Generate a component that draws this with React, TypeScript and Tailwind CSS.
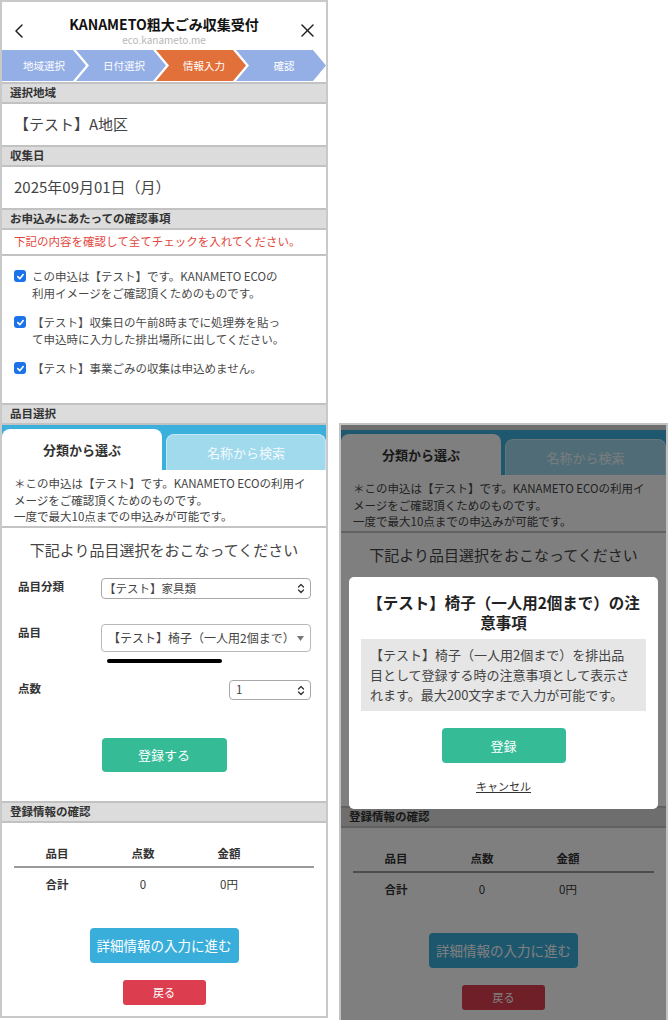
import React from 'react';

const steps = [
  { label: '地域選択', active: false },
  { label: '日付選択', active: false },
  { label: '情報入力', active: true },
  { label: '確認', active: false },
];

const SectionHeader: React.FC<{ children: React.ReactNode }> = ({ children }) => (
  <div className="flex h-[22px] items-center border-y-2 border-[#c2c2c2] bg-[#dcdcdc] px-[8px] text-[11.5px] font-bold leading-none text-[#333]">
    {children}
  </div>
);

const UpDownIcon: React.FC = () => (
  <svg width="8" height="11" viewBox="0 0 8 11" fill="none" stroke="#333" strokeWidth="1.3" strokeLinecap="round" strokeLinejoin="round">
    <path d="M1.5 4 L4 1.5 L6.5 4" />
    <path d="M1.5 7 L4 9.5 L6.5 7" />
  </svg>
);

const CheckMark: React.FC = () => (
  <span className="mt-[2px] flex h-[12px] w-[12px] shrink-0 items-center justify-center rounded-[3px] bg-[#1a73e8]">
    <svg width="9" height="9" viewBox="0 0 10 10" fill="none" stroke="white" strokeWidth="1.8" strokeLinecap="round" strokeLinejoin="round">
      <path d="M2 5.2 L4.2 7.4 L8 2.8" />
    </svg>
  </span>
);

const TopPart: React.FC = () => (
  <>
    {/* title bar */}
    <div className="grid h-[48px] grid-cols-[40px_1fr_40px] items-center pt-[9px]">
      <div className="pl-[12px]">
        <svg width="10" height="14" viewBox="0 0 10 14" fill="none" stroke="#222" strokeWidth="1.5" strokeLinecap="round" strokeLinejoin="round">
          <path d="M8 1 L2 7 L8 13" />
        </svg>
      </div>
      <div className="flex flex-col items-center">
        <div className="text-[14px] font-bold leading-[18px] text-[#111]">KANAMETO粗大ごみ収集受付</div>
        <div className="mt-px text-[10px] leading-[12px] text-[#b8b8b8]">eco.kanameto.me</div>
      </div>
      <div className="flex justify-end pr-[12px]">
        <svg width="13" height="13" viewBox="0 0 13 13" fill="none" stroke="#222" strokeWidth="1.5" strokeLinecap="round">
          <path d="M1 1 L12 12" />
          <path d="M12 1 L1 12" />
        </svg>
      </div>
    </div>

    {/* steps */}
    <div className="mb-px flex h-[31px] bg-white">
      {steps.map((s, i) => (
        <div
          key={s.label}
          className={`flex flex-1 items-center justify-center text-[10.5px] text-white ${
            i === 0
              ? '[clip-path:polygon(0_0,calc(100%-13px)_0,100%_50%,calc(100%-13px)_100%,0_100%)]'
              : '-ml-[10px] pl-[6px] [clip-path:polygon(0_0,calc(100%-13px)_0,100%_50%,calc(100%-13px)_100%,0_100%,13px_50%)]'
          } ${s.active ? 'bg-[#e2703a]' : 'bg-[#94aee6]'}`}
        >
          {s.label}
        </div>
      ))}
    </div>

    <SectionHeader>選択地域</SectionHeader>
    <div className="flex h-[41px] items-center pl-3 text-[15px] text-[#444]">【テスト】A地区</div>
    <SectionHeader>収集日</SectionHeader>
    <div className="flex h-[41px] items-center pl-3 text-[15px] text-[#444]">2025年09月01日（月）</div>
    <SectionHeader>お申込みにあたっての確認事項</SectionHeader>
    <div className="flex h-[26px] items-center border-b-2 border-[#c2c2c2] pl-3 text-[11.5px] text-[#e2483d]">
      下記の内容を確認して全てチェックを入れてください。
    </div>

    {/* confirmations */}
    <div className="h-[147px] space-y-[12px] pl-3 pt-[12px]">
      <div className="flex gap-[6px]">
        <CheckMark />
        <p className="text-[11.5px] leading-[17px] text-[#4a4a4a]">
          この申込は【テスト】です。KANAMETO ECOの<br />利用イメージをご確認頂くためのものです。
        </p>
      </div>
      <div className="flex gap-[6px]">
        <CheckMark />
        <p className="text-[11.5px] leading-[17px] text-[#4a4a4a]">
          【テスト】収集日の午前8時までに処理券を貼っ<br />て申込時に入力した排出場所に出してください。
        </p>
      </div>
      <div className="flex gap-[6px]">
        <CheckMark />
        <p className="text-[11.5px] leading-[17px] text-[#4a4a4a]">【テスト】事業ごみの収集は申込めません。</p>
      </div>
    </div>

    <SectionHeader>品目選択</SectionHeader>
  </>
);

// covered: the part lying under the modal is not shown
const ItemPart: React.FC<{ covered?: boolean }> = ({ covered }) => (
  <>
    {/* tabs */}
    <div className="flex h-[45px] items-end gap-[4px] bg-[#3cb0dc]">
      <div className="flex h-[41px] w-[160px] items-center justify-center rounded-t-[8px] bg-white text-[13px] font-bold text-[#333]">
        分類から選ぶ
      </div>
      <div className="flex h-[36px] flex-1 items-center justify-center rounded-t-[8px] border border-b-0 border-[#c6e8f4] bg-[#a1d9ed] text-[13px] text-[#f2fafd]">
        名称から検索
      </div>
    </div>
    <div className="h-[58px] border-b-2 border-[#c4c4c4] pl-3 pt-[5px] text-[11.5px] leading-[16.5px] text-[#444]">
      ＊この申込は【テスト】です。KANAMETO ECOの利用イ<br />メージをご確認頂くためのものです。<br />一度で最大10点までの申込みが可能です。
    </div>

    {/* item form */}
    <div className="h-[273px] pt-[11px]">
      <div className="text-center text-[15px] leading-[22px] text-[#444]">下記より品目選択をおこなってください</div>
      <div className={`${covered ? 'invisible' : ''}`}>
        <div className="mt-[17px] grid grid-cols-[83px_1fr] pl-[16px] pr-[15px] text-[11.5px] text-[#333]">
          <div className="font-bold leading-[17px]">品目分類</div>
          <div className="flex h-[21px] items-center justify-between rounded-[4px] border border-[#a8a8a8] pl-[2px] pr-[5px] text-[#444]">
            <span>【テスト】家具類</span>
            <UpDownIcon />
          </div>

          <div className="mt-[25px] font-bold leading-[17px]">品目</div>
          <div className="mt-[25px]">
            <div className="flex h-[28px] items-center justify-between rounded-[4px] border border-[#b8b8b8] pl-[6px] pr-[6px] text-[12px] text-[#444]">
              <span>【テスト】椅子（一人用2個まで）</span>
              <svg width="7" height="5" viewBox="0 0 7 5"><path d="M0 0 H7 L3.5 5 Z" fill="#777" /></svg>
            </div>
            <div className="ml-[6px] mt-[7px] h-[4px] w-[115px] rounded-full bg-black" />
          </div>

          <div className="mt-[17px] font-bold leading-[17px]">点数</div>
          <div className="mt-[17px] flex justify-end">
            <div className="flex h-[20px] w-[82px] items-center justify-between rounded-[4px] border border-[#a8a8a8] pl-[6px] pr-[5px] text-[#444]">
              <span>1</span>
              <UpDownIcon />
            </div>
          </div>
        </div>
        <button className="mx-auto mt-[38px] flex h-[34px] w-[125px] items-center justify-center rounded-[4px] bg-[#35bc97] text-[13px] text-white">
          登録する
        </button>
      </div>
    </div>

    <SectionHeader>登録情報の確認</SectionHeader>

    {/* summary */}
    <div className="h-[193px] pt-[19px]">
      <div className="mx-3">
        <div className="grid h-[26px] grid-cols-[86px_86px_86px_1fr] items-center border-b-2 border-[#9a9a9a] text-center text-[11.5px] font-bold text-[#333]">
          <div>品目</div>
          <div>点数</div>
          <div>金額</div>
          <div />
        </div>
        <div className="grid h-[34px] grid-cols-[86px_86px_86px_1fr] items-center text-center text-[11.5px] text-[#333]">
          <div className="font-bold">合計</div>
          <div>0</div>
          <div>0円</div>
          <div />
        </div>
      </div>
      <button className="mx-auto mt-[26px] flex h-[35px] w-[149px] items-center justify-center rounded-[4px] bg-[#3aaedb] text-[13.5px] text-white">
        詳細情報の入力に進む
      </button>
      <button className="mx-auto mt-[17px] flex h-[25px] w-[83px] items-center justify-center rounded-[3px] bg-[#dc3e4f] text-[11px] text-white">
        戻る
      </button>
    </div>
  </>
);

export default function App() {
  return (
    <div className="flex h-[1020px] w-[668px] items-start overflow-hidden bg-white font-['Noto_Sans_CJK_JP','Noto_Sans',sans-serif] leading-normal">
      {/* main screen */}
      <div className="h-[1018px] w-[328px] overflow-hidden border-2 border-[#c9c9c9] bg-white">
        <TopPart />
        <ItemPart />
      </div>

      {/* modal screen */}
      <div className="relative ml-[11px] mt-[423px] h-[597px] w-[329px] overflow-hidden border-2 border-b-0 border-[#c2c2c2] bg-white">
        <div className="h-[5px] bg-[#dcdcdc]" />
        <ItemPart covered />
        <div className="absolute inset-0 bg-black/50" />
        <div className="absolute left-[8px] right-[8px] top-[152px] rounded-[5px] bg-white px-3 pb-[15px] pt-[15px]">
          <p className="text-center text-[15.5px] font-bold leading-[20px] text-[#222]">
            【テスト】椅子（一人用2個まで）の注<br />意事項
          </p>
          <div className="mt-[7px] bg-[#e6e6e6] px-[9px] py-[6px] text-[13px] leading-[20px] text-[#444]">
            【テスト】椅子（一人用2個まで）を排出品<br />目として登録する時の注意事項として表示さ<br />れます。最大200文字まで入力が可能です。
          </div>
          <button className="mx-auto mt-[17px] flex h-[35px] w-[124px] items-center justify-center rounded-[4px] bg-[#35bc97] text-[13px] text-white">
            登録
          </button>
          <div className="mt-[15px] text-center text-[11px] leading-[16px] text-[#333] underline">キャンセル</div>
        </div>
      </div>
    </div>
  );
}
